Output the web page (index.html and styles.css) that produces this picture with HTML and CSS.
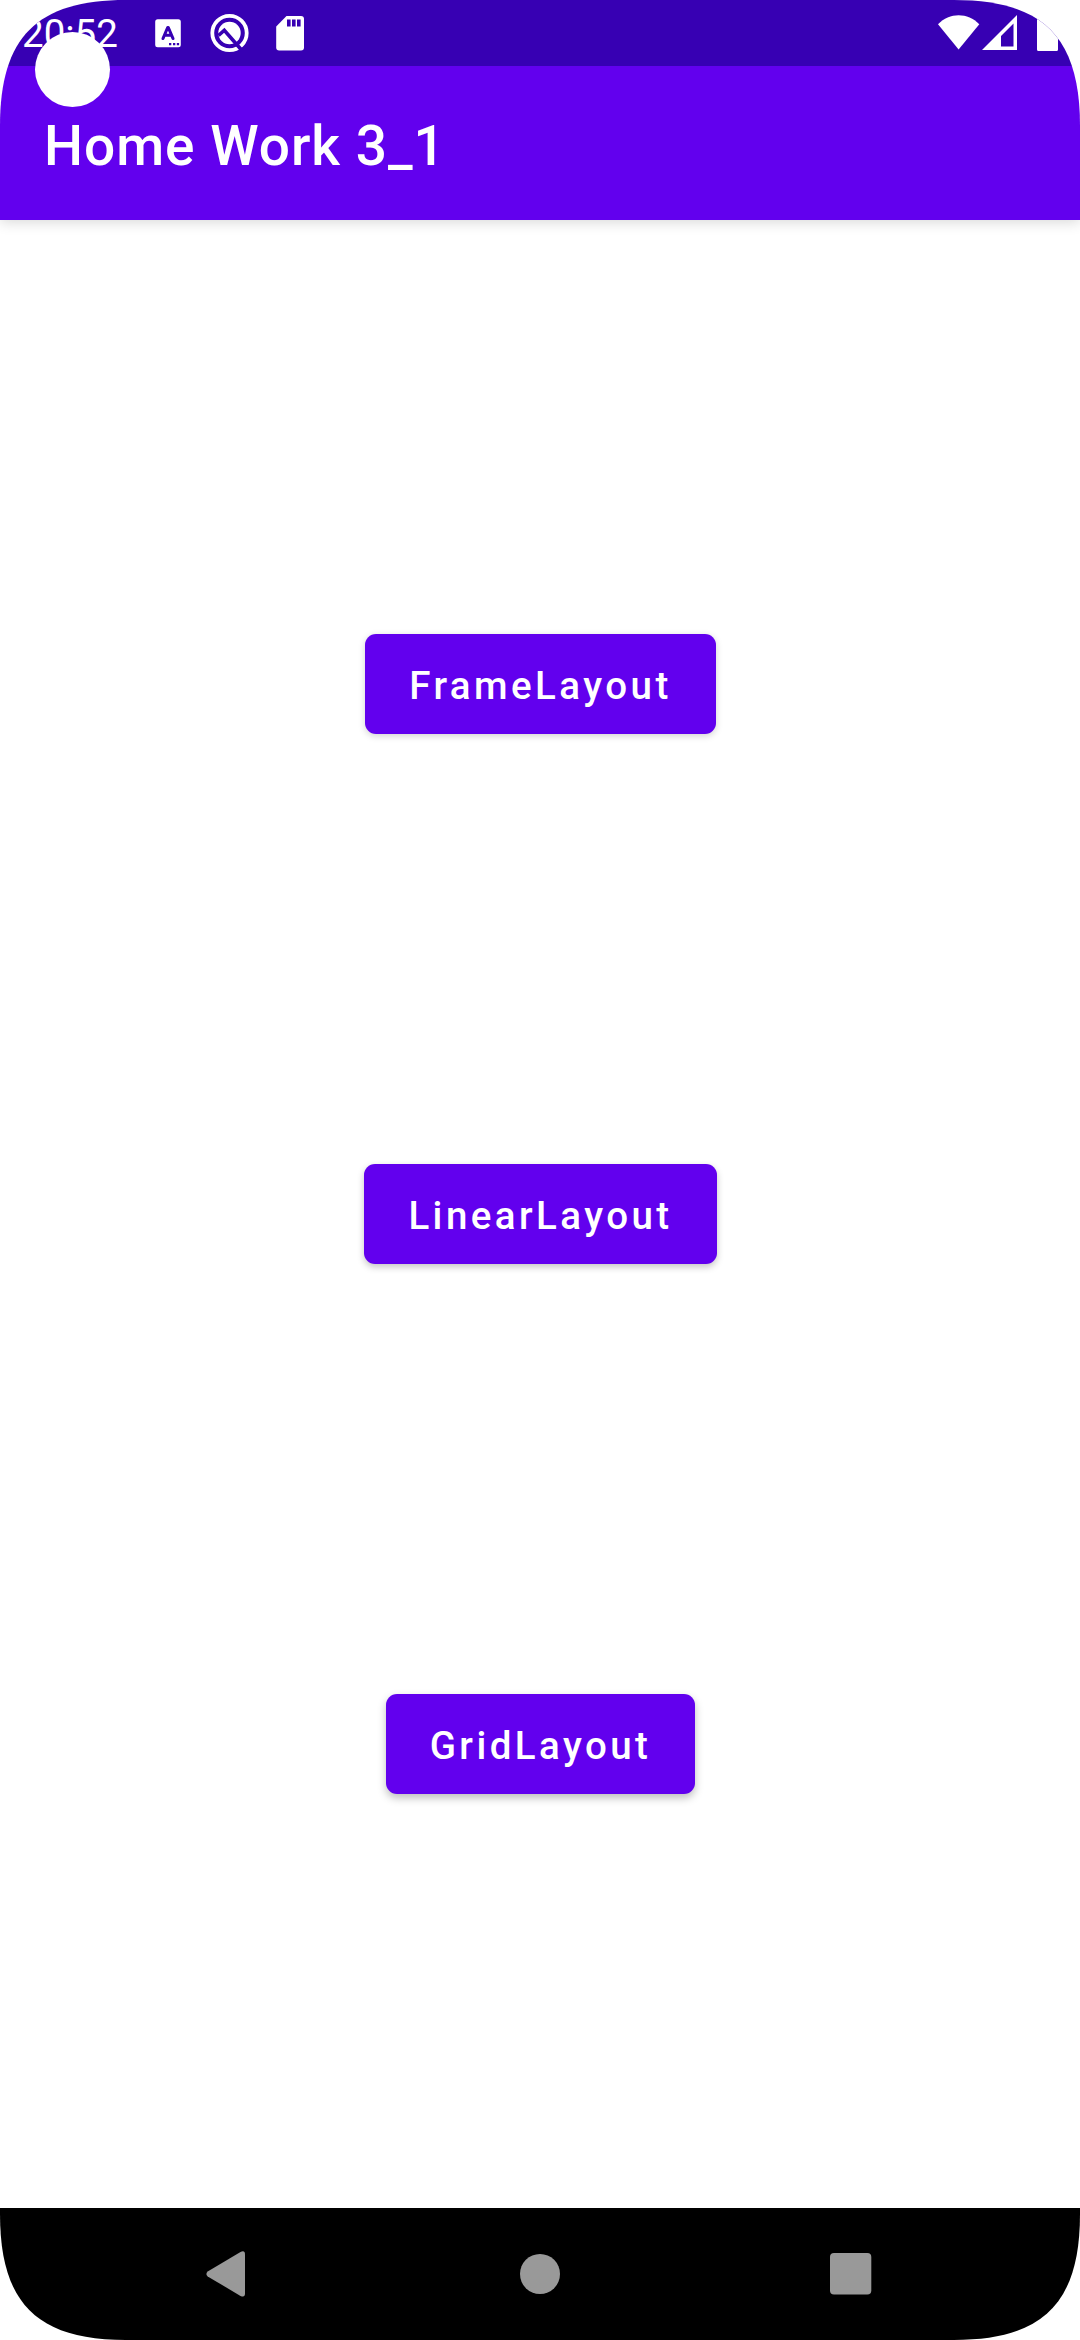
FILE: index.html
```html
<!DOCTYPE html>
<html lang="en">
<head>
<meta charset="utf-8">
<title>Home Work 3_1</title>
<link rel="stylesheet" href="styles.css">
</head>
<body>
<div class="screen">
  <header class="status-bar">
    <div class="status-left">
      <span class="clock">20:52</span>
      <svg class="icon-keyboard" width="26" height="29" viewBox="0 0 26 29">
        <rect x="0.2" y="0.3" width="25.6" height="28" rx="2.5" fill="#fff"/>
        <path d="M8 19.500 12.700 8.500h.6L18 19.500M9.500 16.300h7" fill="none" stroke="#3700b3" stroke-width="3.100" stroke-linecap="round" stroke-linejoin="round"/>
        <path d="M14 24h2.300v2.300H14zM18 24h2.300v2.300H18zM21.800 24h2.300v2.300h-2.300z" fill="#3700b3"/>
      </svg>
      <svg class="icon-debug" width="40" height="40" viewBox="0 0 40 40">
        <circle cx="20.500" cy="20" r="17.200" fill="none" stroke="#fff" stroke-width="3.800"/>
        <circle cx="20.500" cy="20" r="11.200" fill="#fff"/>
        <path d="M9.500 22.500 15.300 17.200 33 37.500" fill="none" stroke="#3700b3" stroke-width="3.600"/>
      </svg>
      <svg class="icon-sd" width="28" height="35" viewBox="0 0 28 35">
        <path d="M10.500 0H25Q28 0 28 3V31.500Q28 34.500 25 34.500H3.200Q.2 34.500 .2 31.500V10.500Z" fill="#fff"/>
        <path d="M11 3.500h3.600v7H11zM16 3.500h3.600v7H16zM21 3.500h3.600v7H21z" fill="#3700b3"/>
      </svg>
    </div>
    <div class="status-right">
      <svg class="icon-wifi" width="42" height="35" viewBox="0 0 42 35">
        <path d="M0 9.200C11.500-2.800 29.800-2.800 41.300 9.200L20.600 34.500Z" fill="#fff"/>
      </svg>
      <svg class="icon-signal" width="35" height="35" viewBox="0 0 35 35">
        <path fill-rule="evenodd" d="M35 0V35H0ZM31.500 8.500 19 21V31.500H31.500Z" fill="#fff"/>
      </svg>
      <svg class="icon-battery" width="21" height="36" viewBox="0 0 21 36">
        <path d="M6 0h9v3.500h4.500Q21 3.500 21 5V34.500Q21 36 19.500 36H1.500Q0 36 0 34.500V5Q0 3.500 1.500 3.500H6z" fill="#fff"/>
      </svg>
    </div>
    <div class="camera-hole"></div>
  </header>
  <div class="app-bar"><h1 class="title">Home Work 3_1</h1></div>
  <main class="content">
    <button class="button button-high">FrameLayout</button>
    <button class="button button-mid">LinearLayout</button>
    <button class="button button-low">GridLayout</button>
  </main>
  <nav class="nav-bar">
    <svg class="nav-back" width="39" height="46" viewBox="0 0 39 46">
      <path d="M34.500 .900Q39-1.200 39 3.500V42.500Q39 47 34.500 44.900L1.700 25.400Q-.9 23 1.700 20.600Z" fill="#999"/>
    </svg>
    <svg class="nav-home" width="40" height="40" viewBox="0 0 40 40"><circle cx="20" cy="20" r="20" fill="#999"/></svg>
    <svg class="nav-recent" width="42" height="42" viewBox="0 0 42 42"><rect width="41.300" height="41.500" rx="4" fill="#999"/></svg>
  </nav>
</div>
</body>
</html>
```

FILE: styles.css
```css
* {
  box-sizing: border-box;
}

body {
  margin: 0;
  background: #fff;
  font-family: Roboto, sans-serif;
}

.screen {
  display: flex;
  flex-direction: column;
  width: 1080px;
  height: 2340px;
  overflow: hidden;
  background: #fff;
  clip-path: path("M0 126C0 37 37 0 126 0H954C1043 0 1080 37 1080 126V2214C1080 2303 1043 2340 954 2340H126C37 2340 0 2303 0 2214Z");
}

.status-bar {
  position: relative;
  z-index: 2;
  display: flex;
  flex: none;
  justify-content: space-between;
  height: 66px;
  padding: 0 22px;
  background: #3700b3;
}

.status-left,
.status-right {
  display: flex;
  align-items: flex-start;
}

.clock {
  width: 96px;
  margin-top: 11px;
  color: #fff;
  font-size: 38.5px;
  line-height: 45px;
}

.icon-keyboard {
  margin: 19px 0 0 37px;
}

.icon-debug {
  margin: 13px 0 0 28px;
}

.icon-sd {
  margin: 16px 0 0 27px;
}

.icon-wifi {
  margin-top: 15px;
}

.icon-signal {
  margin: 15px 0 0 2px;
}

.icon-battery {
  margin: 15px 0 0 20px;
}

.camera-hole {
  position: absolute;
  top: 32px;
  left: 35px;
  width: 75px;
  height: 75px;
  border-radius: 50%;
  background: #fff;
}

.app-bar {
  position: relative;
  z-index: 1;
  display: flex;
  flex: none;
  align-items: center;
  height: 154px;
  padding: 6px 44px 0;
  background: #6200ee;
  box-shadow: 0 2px 13px rgba(0, 0, 0, 0.16);
}

.title {
  margin: 0;
  color: #fff;
  font-size: 55px;
  font-weight: 500;
  letter-spacing: 0.98px;
  line-height: 64px;
}

.content {
  display: flex;
  flex: 1;
  flex-direction: column;
  align-items: center;
  justify-content: space-between;
  padding: 414px 0 414px 1px;
}

.button {
  height: 100px;
  padding: 2px 44px 0;
  border: 0;
  border-radius: 11px;
  background: #6200ee;
  color: #fff;
  font-family: inherit;
  font-size: 38.5px;
  font-weight: 500;
  letter-spacing: 3.44px;
  line-height: 45px;
}

.button-high {
  box-shadow: 0 2px 7px rgba(0, 0, 0, 0.18);
}

.button-mid {
  box-shadow: 0 3px 7px rgba(0, 0, 0, 0.23);
}

.button-low {
  box-shadow: 0 4px 8px rgba(0, 0, 0, 0.26);
}

.nav-bar {
  display: flex;
  flex: none;
  align-items: center;
  justify-content: space-between;
  height: 132px;
  padding: 0 208px 0 206px;
  background: #000;
}

.nav-home {
  margin-left: 5px;
}
```
